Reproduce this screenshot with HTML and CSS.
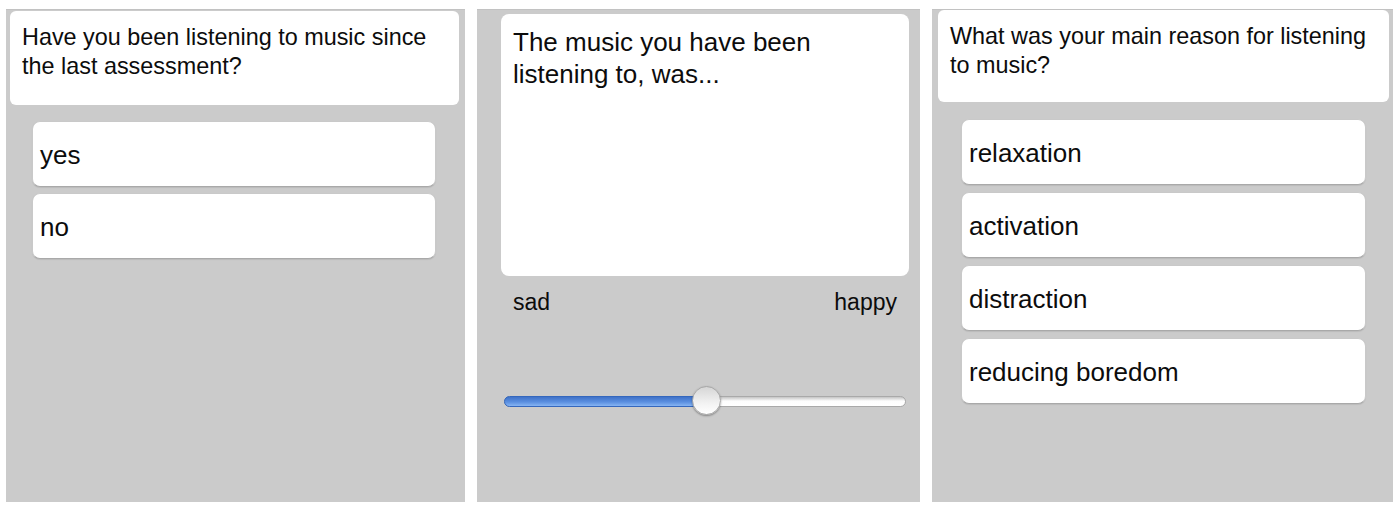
FILE: index.html
```html
<!DOCTYPE html>
<html lang="en">
<head>
    <meta charset="UTF-8">
    <meta name="viewport" content="width=device-width, initial-scale=1.0">
    <title>Music Assessment</title>
    <link rel="stylesheet" href="styles.css">
</head>
<body>
    <main class="screens">
        <!-- Question 1: yes / no -->
        <section class="screen screen-first">
            <div class="question">Have you been listening to music since the last assessment?</div>
            <ul class="answers">
                <li class="answer">yes</li>
                <li class="answer">no</li>
            </ul>
        </section>

        <!-- Question 2: mood slider -->
        <section class="screen screen-slider">
            <div class="question question-large">The music you have been listening to, was...</div>
            <div class="scale-labels">
                <span>sad</span>
                <span>happy</span>
            </div>
            <div class="slider">
                <div class="slider-track">
                    <div class="slider-fill" style="width: 50%"></div>
                    <div class="slider-thumb" style="left: 50%"></div>
                </div>
            </div>
        </section>

        <!-- Question 3: main reason -->
        <section class="screen screen-last">
            <div class="question">What was your main reason for listening to music?</div>
            <ul class="answers">
                <li class="answer">relaxation</li>
                <li class="answer">activation</li>
                <li class="answer">distraction</li>
                <li class="answer">reducing boredom</li>
            </ul>
        </section>
    </main>
</body>
</html>
```

FILE: styles.css
```css
body {
    margin: 0;
    background-color: #fff;
    font-family: "Liberation Sans", Arial, Helvetica, sans-serif;
    color: #0c0c0c;
}

.screens {
    display: flex;
    gap: 12px;
    padding: 9px 0 0 6px;
}

.screen {
    height: 493px;
    box-sizing: border-box;
    background-color: #cbcbcb;
    border-top: 1px solid #c2c2c2;
}

.screen-first {
    width: 459px;
    padding: 1px 6px 0 4px;
}

.screen-slider {
    width: 443px;
    padding: 4px 11px 0 24px;
}

.screen-last {
    width: 461px;
    padding: 0 4px 0 6px;
}

.question {
    background-color: #fff;
    border-radius: 6px;
    font-size: 23.4px;
    line-height: 29px;
    padding: 12px 12px 24px;
}

.screen-last .question {
    padding-bottom: 22px;
}

.question-large {
    height: 262px;
    box-sizing: border-box;
    font-size: 26px;
    line-height: 32px;
    padding: 12px 12px;
    border-radius: 8px;
}

.answers {
    list-style: none;
    margin: 16px 0 0;
    padding: 0;
    display: flex;
    flex-direction: column;
    gap: 6px;
}

.screen-first .answers {
    margin-left: 22px;
    margin-right: 23px;
}

.screen-last .answers {
    margin: 17px 23px 0 23px;
    gap: 7px;
}

.answer {
    height: 66px;
    box-sizing: border-box;
    display: flex;
    align-items: center;
    padding: 3px 7px 0;
    font-size: 26px;
    background-color: #fff;
    border: 1px solid #c9c9c9;
    border-bottom-color: #a9a9a9;
    border-radius: 8px;
    box-shadow: 0 1px 1px rgba(0, 0, 0, 0.08);
}

.scale-labels {
    display: flex;
    justify-content: space-between;
    padding: 0 12px;
    margin-top: 13px;
    font-size: 23px;
}

.slider {
    margin: 70px 3px 0;
    height: 30px;
    display: flex;
    align-items: center;
}

.slider-track {
    position: relative;
    flex: 1;
    height: 11px;
    box-sizing: border-box;
    border-radius: 6px;
    border: 1px solid #a9a9a9;
    background: linear-gradient(#c4c4c4, #fdfdfd 45%, #fff);
}

.slider-fill {
    height: 100%;
    margin: -1px 0 0 -1px;
    border: 1px solid #3467bd;
    border-radius: 6px 0 0 6px;
    background: linear-gradient(#3f72c8, #5a8fe0 55%, #86b4f3);
}

.slider-thumb {
    position: absolute;
    top: 50%;
    width: 29px;
    height: 29px;
    box-sizing: border-box;
    margin: -15px 0 0 -13px;
    border-radius: 50%;
    border: 1px solid #a6a6a6;
    background: linear-gradient(#d6d6d6, #f2f2f2 60%, #fff);
    box-shadow: 0 1px 2px rgba(0, 0, 0, 0.35);
}
```
